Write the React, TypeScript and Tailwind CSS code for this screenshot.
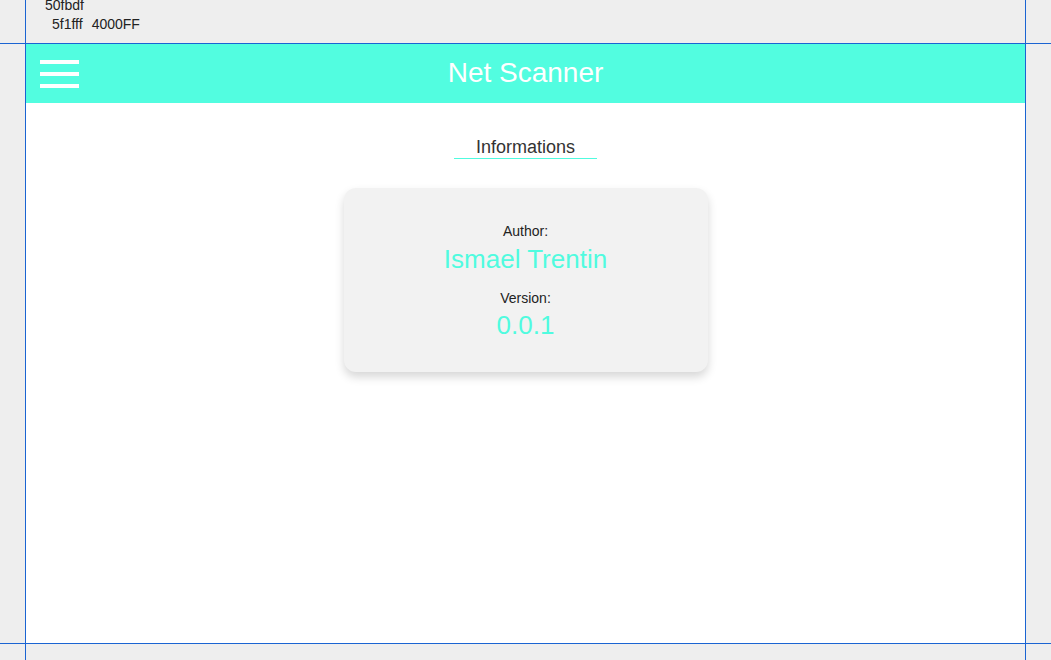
// App.tsx
const teal = "bg-[#52fde0]";

const Hamburger = () => (
  <button className="flex flex-col gap-[8px] w-[39px]">
    <span className="block h-[4px] w-full bg-white"></span>
    <span className="block h-[4px] w-full bg-white"></span>
    <span className="block h-[4px] w-full bg-white"></span>
  </button>
);

const InfoCard = () => (
  <div className="w-[364px] rounded-[12px] bg-[#f2f2f2] pt-[35px] pb-[32px] flex flex-col items-center text-center shadow-[0_5px_10px_rgba(0,0,0,0.16)]">
    <div className="text-[14px] leading-[16px] text-[#222]">Author:</div>
    <div className="mt-[5px] text-[26px] leading-[30px] text-[#50fbdf]">Ismael Trentin</div>
    <div className="mt-[16px] text-[14px] leading-[16px] text-[#222]">Version:</div>
    <div className="mt-[4px] text-[26px] leading-[30px] text-[#50fbdf]">0.0.1</div>
  </div>
);

export default function App() {
  return (
    <div className="relative w-full h-[660px] overflow-hidden bg-[#eeeeee] font-['Liberation_Sans',Arial,sans-serif]">
      {/* colour notes */}
      <div className="h-[44px] pl-[45px] text-[14px] leading-[19px] text-[#222]">
        <div className="relative -top-[4px]">
          <div>50fbdf</div>
          <div className="pl-[7px]">
            <span>5f1fff</span>
            <span className="ml-[9px]">4000FF</span>
          </div>
        </div>
      </div>

      {/* app frame */}
      <div className="ml-[26px] w-[999px] h-[599px] bg-white flex flex-col">
        <header className={`${teal} h-[59px] grid grid-cols-[1fr_auto_1fr] items-center px-[14px]`}>
          <div className="flex items-center">
            <Hamburger />
          </div>
          <h1 className="text-[28px] leading-[32px] text-white -mt-[1px]">Net Scanner</h1>
          <div></div>
        </header>

        <main className="flex flex-col items-center">
          <div className="mt-[34px] px-[22px] border-b border-[#50fbdf] text-[18px] leading-[21px] text-[#333]">
            Informations
          </div>
          <div className="mt-[29px]">
            <InfoCard />
          </div>
        </main>
      </div>

      {/* guide lines */}
      <div className="absolute left-0 right-0 top-[43px] h-px bg-[#1a64d2]"></div>
      <div className="absolute left-0 right-0 top-[643px] h-px bg-[#1a64d2]"></div>
      <div className="absolute top-0 bottom-0 left-[25px] w-px bg-[#1a64d2]"></div>
      <div className="absolute top-0 bottom-0 left-[1025px] w-px bg-[#1a64d2]"></div>
    </div>
  );
}
